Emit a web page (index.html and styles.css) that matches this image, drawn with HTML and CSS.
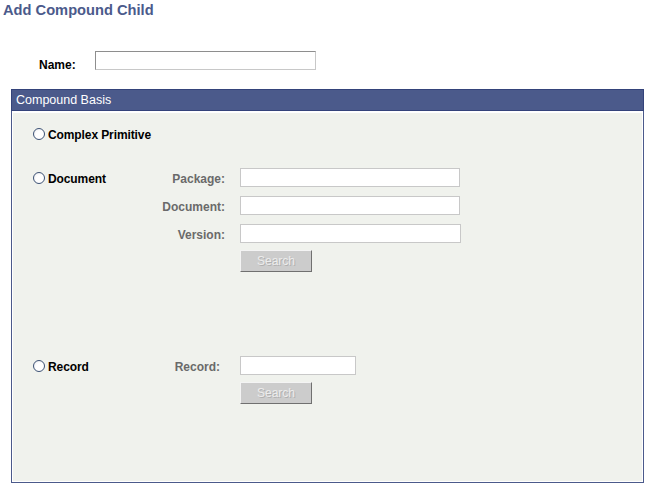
FILE: index.html
```html
<!DOCTYPE html>
<html lang="en">
<head>
<meta charset="utf-8">
<title>Add Compound Child</title>
<link rel="stylesheet" href="styles.css">
</head>
<body>
  <h1 class="page-title">Add Compound Child</h1>

  <div class="name-row">
    <label class="name-label" for="name">Name:</label>
    <input class="text-input name-input" id="name" type="text">
  </div>

  <section class="panel">
    <div class="panel-header">Compound Basis</div>
    <div class="panel-body">
      <div class="group group-complex">
        <div class="option"><span class="radio"></span><span class="option-label">Complex Primitive</span></div>
      </div>

      <div class="group group-document">
        <div class="option"><span class="radio"></span><span class="option-label">Document</span></div>
        <div class="fields">
          <div class="field"><span class="field-label">Package:</span><input class="text-input disabled wide" type="text" disabled></div>
          <div class="field"><span class="field-label">Document:</span><input class="text-input disabled wide" type="text" disabled></div>
          <div class="field"><span class="field-label">Version:</span><input class="text-input disabled wider" type="text" disabled></div>
          <div class="field"><span class="field-label"></span><button class="btn-search" type="button" disabled>Search</button></div>
        </div>
      </div>

      <div class="group group-record">
        <div class="option"><span class="radio"></span><span class="option-label">Record</span></div>
        <div class="fields">
          <div class="field"><span class="field-label short">Record:</span><input class="text-input disabled narrow" type="text" disabled></div>
          <div class="field"><span class="field-label"></span><button class="btn-search" type="button" disabled>Search</button></div>
        </div>
      </div>
    </div>
  </section>
</body>
</html>
```

FILE: styles.css
```css
body {
  margin: 0;
  background: #ffffff;
  font-family: "Liberation Sans", Arial, sans-serif;
  font-size: 12px;
  color: #000000;
}

.page-title {
  margin: 0;
  padding: 1px 3px 0;
  height: 20px;
  font-size: 14.67px;
  font-weight: bold;
  color: #4b5a8b;
  line-height: 18px;
}

.name-row {
  display: flex;
  align-items: center;
  margin-top: 30px;
  padding-left: 39px;
  height: 19px;
}

.name-label {
  width: 56px;
  font-weight: bold;
  font-size: 12px;
  padding-top: 9px;
}

.text-input {
  box-sizing: border-box;
  height: 19px;
  margin: 0;
  padding: 0 2px;
  background: #ffffff;
  font: 12px "Liberation Sans", Arial, sans-serif;
}

.name-input {
  width: 221px;
  border: 1px solid #c8c8c8;
  border-top-color: #8e8e8e;
  border-left-color: #8e8e8e;
}

.text-input.disabled {
  border: 1px solid #c8c8c8;
}

.wide { width: 220px; }
.wider { width: 221px; }
.narrow { width: 116px; }

.panel {
  box-sizing: border-box;
  width: 633px;
  height: 394px;
  margin: 19px 0 0 11px;
  border: 1px solid #4b5a8b;
  border-top: none;
  background: #ffffff;
  display: flex;
  flex-direction: column;
}

.panel-header {
  box-sizing: border-box;
  height: 22px;
  margin: 0 -1px;
  padding: 2px 4px 0;
  background: #4b5a8b;
  border: 1px solid #34437a;
  color: #ffffff;
  font-size: 12.5px;
  line-height: 16px;
}

.panel-body {
  flex: 1;
  margin: 2px 1px 1px;
  background: #f0f2ed;
  padding-left: 20px;
  display: flex;
  flex-direction: column;
}

.group {
  display: flex;
  align-items: flex-start;
}

.group-complex { margin-top: 11px; }
.group-document { margin-top: 25px; }
.group-record { margin-top: 84px; }

.option {
  display: flex;
  align-items: center;
  height: 19px;
  width: 127px;
}

.radio {
  box-sizing: border-box;
  width: 12px;
  height: 12px;
  border-radius: 50%;
  border: 1px solid #3d5275;
  background: radial-gradient(circle at 60% 60%, #ffffff 0 45%, #e4e6ea 100%);
  margin-right: 3px;
}

.option-label {
  padding-top: 2px;
  font-weight: bold;
  font-size: 12px;
  letter-spacing: -0.1px;
  color: #000000;
}

.fields {
  display: flex;
  flex-direction: column;
  gap: 9px;
}

.field {
  display: flex;
  align-items: center;
}

.field-label {
  width: 65px;
  margin-right: 15px;
  padding-top: 2px;
  text-align: right;
  font-weight: bold;
  color: #6a6a6a;
}

.field-label.short {
  width: 60px;
  margin-right: 20px;
}

.field:last-child {
  margin-top: -2px;
}

.btn-search {
  box-sizing: border-box;
  width: 72px;
  height: 22px;
  padding: 0;
  background: #cccccc;
  border: 1px solid;
  border-color: #f4f4f4 #707070 #707070 #f4f4f4;
  color: #ececec;
  text-shadow: 1px 1px 0 #b0b0b0;
  font: 12px "Liberation Sans", Arial, sans-serif;
}
```
